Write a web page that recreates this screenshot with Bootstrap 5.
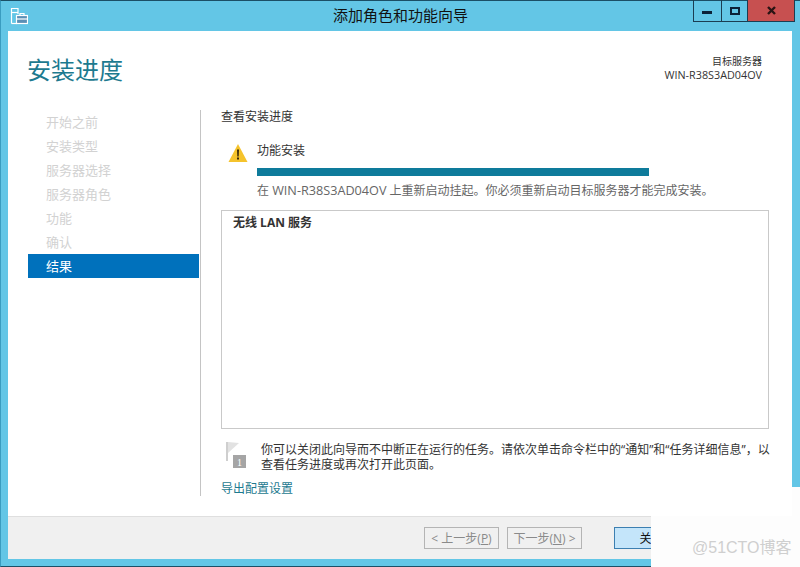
<!DOCTYPE html>
<html lang="zh-CN">
<head>
  <meta charset="UTF-8">
  <title>添加角色和功能向导</title>
  <link href="https://cdn.jsdelivr.net/npm/bootstrap@5.3.3/dist/css/bootstrap.min.css" rel="stylesheet">
  <style>
    html, body { height: 567px; overflow: hidden; }
    body { font-family: "Open Sans", "Noto Sans CJK SC", sans-serif; font-size: 12px; color: #333; background: #fff; }
    .wiz-window { position: relative; height: 567px; background: #63c6e6; border: 1px solid #1b4f66; border-left-color: #3a9cc0; border-right: 0; }
    .wiz-title { height: 30px; font-size: 15px; line-height: 29px; color: #111; text-align: center; }
    .wiz-logo { position: absolute; left: 9px; top: 6px; }
    .wiz-ctrls { position: absolute; top: -1px; left: 692px; height: 22px; border: 1px solid #1b3d52; border-top: 0; }
    .wiz-ctrl { width: 27px; }
    .wiz-ctrl + .wiz-ctrl { width: 26px; border-left: 1px solid #1b3d52; }
    .wiz-ctrl + .wiz-ctrl.wiz-ctrl-close { width: 47px; background: #c75050; }
    .wiz-client { margin: 0 8px 7px 7px; background: #fff; }
    .wiz-head { padding: 22px 30px 0 19px; height: 79px; }
    .wiz-heading { font-size: 24px; line-height: 34px; color: #1d7a8f; font-weight: 400; margin: 0; }
    .wiz-target { line-height: 13px; margin-top: 2px; color: #333; font-size: 10.8px; }
    .wiz-target-cn { font-size: 10px; line-height: 13px; }
    .wiz-nav { width: 173px; margin-left: 20px; border-right: 1px solid #c4c4c4; padding-right: 1px; }
    .wiz-step { height: 24px; line-height: 24px; padding-left: 18px; font-size: 13px; color: #d2d2d2; }
    .wiz-step-on { background: #0071bc; color: #fff; }
    .wiz-main { padding-left: 20px; width: 568px; }
    .wiz-sub { line-height: 14px; margin-bottom: 19px; }
    .wiz-warn { padding-left: 7px; }
    .wiz-warn-body { width: 392px; margin-left: 9px; }
    .wiz-bar { height: 8px; background: #0e7b9b; margin: 9px 0 6px; }
    .wiz-state { white-space: nowrap; color: #666; line-height: 16px; }
    .wiz-state-host { font-size: 12.67px; }
    .wiz-box { height: 219px; border: 1px solid #c9c9c9; padding: 3px 11px; margin-top: 11px; font-weight: 700; line-height: 18px; }
    .wiz-note { padding: 13px 0 0 3px; line-height: 15px; }
    .wiz-note svg { margin-top: -1px; }
    .wiz-note-text { margin-left: 13px; white-space: nowrap; }
    .wiz-link { display: block; margin-top: 9px; color: #1d7a8f; text-decoration: none; line-height: 15px; }
    .wiz-foot { height: 43px; margin-top: 20px; background: #f0f0f0; border-top: 1px solid #dfdfdf; padding-top: 10px; padding-left: 416px; }
    .wiz-btn { width: 75px; height: 22px; padding: 0; font-size: 12px; line-height: 21px; border-radius: 0; border: 1px solid #adadad; background: #f0f0f0; color: #8a8a8a; }
    .wiz-btn:disabled { border-color: #b4b4b4; background: #f0f0f0; color: #8a8a8a; opacity: 1; }
    .wiz-btn-main { background: #c4e5fa; border-color: #3c7fb1; color: #111; margin-left: 24px; }
    .wiz-mark-a { position: absolute; left: 650px; top: 515px; width: 150px; height: 52px; background: #fdfdfd; color: #cfcfcf; font-size: 16px; padding: 22px 0 0 41px; line-height: 20px; font-family: "Liberation Sans", "Noto Sans CJK SC", sans-serif; }
    .wiz-mark-b { position: absolute; left: 791px; top: 486px; width: 9px; height: 30px; background: #fdfdfd; }
  </style>
</head>
<body>
<div class="wiz-window d-flex flex-column">
  <div class="wiz-title">添加角色和功能向导</div>
  <svg class="wiz-logo" width="18" height="18" viewBox="0 0 18 18" fill="none" stroke="#fff" stroke-width="1.2">
    <path d="M1.5 16.5V1.5H8V7"/><path d="M1.5 5.5H8"/><path d="M1.5 16.5H7"/>
    <rect x="6.5" y="8.5" width="11" height="8" fill="#5b8fb5"/><path d="M10 8.5V6.5H14V8.5"/><path d="M6.5 12H17.5"/>
  </svg>
  <div class="wiz-ctrls d-flex">
    <div class="wiz-ctrl d-flex align-items-center justify-content-center">
      <svg width="11" height="6"><rect width="10" height="3" y="3" fill="#0c2238"/></svg>
    </div>
    <div class="wiz-ctrl d-flex align-items-center justify-content-center">
      <svg width="10" height="8" fill="none" stroke="#0c2238" stroke-width="2"><rect x="1" y="1" width="8" height="6"/></svg>
    </div>
    <div class="wiz-ctrl wiz-ctrl-close d-flex align-items-center justify-content-center">
      <svg width="9" height="9" stroke="#2a1414" stroke-width="2.4"><path d="M1 1L8 8M8 1L1 8"/></svg>
    </div>
  </div>

  <div class="wiz-client flex-grow-1 d-flex flex-column">
    <div class="wiz-head d-flex justify-content-between">
      <h1 class="wiz-heading">安装进度</h1>
      <div class="wiz-target text-end">
        <div class="wiz-target-cn">目标服务器</div>
        <div>WIN-R38S3AD04OV</div>
      </div>
    </div>

    <div class="d-flex">
      <div class="wiz-nav">
        <div class="wiz-step">开始之前</div>
        <div class="wiz-step">安装类型</div>
        <div class="wiz-step">服务器选择</div>
        <div class="wiz-step">服务器角色</div>
        <div class="wiz-step">功能</div>
        <div class="wiz-step">确认</div>
        <div class="wiz-step wiz-step-on">结果</div>
      </div>
      <div class="wiz-main">
        <div class="wiz-sub">查看安装进度</div>
        <div class="wiz-warn d-flex">
          <svg width="20" height="20" viewBox="0 0 20 20" class="flex-shrink-0">
            <path d="M10 1L19.5 19H.5Z" fill="#f5c32c"/><path d="M9 6.5H11L10.7 13.5H9.3Z" fill="#3a2a08"/><rect x="9" y="14.5" width="2" height="2" fill="#3a2a08"/>
          </svg>
          <div class="wiz-warn-body">
            <div style="line-height:16px">功能安装</div>
            <div class="wiz-bar"></div>
            <div class="wiz-state">在 <span class="wiz-state-host">WIN-R38S3AD04OV</span> 上重新启动挂起。你必须重新启动目标服务器才能完成安装。</div>
          </div>
        </div>
        <div class="wiz-box">无线 LAN 服务</div>
        <div class="wiz-note d-flex">
          <svg width="24" height="28" viewBox="0 0 24 28" class="flex-shrink-0">
            <path d="M2 1H4V20H2Z" fill="#cfcfcf"/><path d="M4 1L15 2L4 12Z" fill="#e2e2e2"/><rect x="9" y="14" width="13" height="13" fill="#a5a5a5"/>
            <text x="15.5" y="25" font-size="10" fill="#fff" text-anchor="middle" font-family="Liberation Serif">1</text>
          </svg>
          <div class="wiz-note-text">你可以关闭此向导而不中断正在运行的任务。请依次单击命令栏中的“通知”和“任务详细信息”，以<br>查看任务进度或再次打开此页面。</div>
        </div>
        <a href="#" class="wiz-link">导出配置设置</a>
      </div>
    </div>

    <div class="wiz-foot d-flex gap-2 mt-auto">
      <button class="btn wiz-btn" disabled>&lt; 上一步(<u>P</u>)</button>
      <button class="btn wiz-btn" disabled>下一步(<u>N</u>) &gt;</button>
      <button class="btn wiz-btn wiz-btn-main">关闭</button>
    </div>
  </div>

  <div class="wiz-mark-b"></div>
  <div class="wiz-mark-a">@51CTO博客</div>
</div>
</body>
</html>
